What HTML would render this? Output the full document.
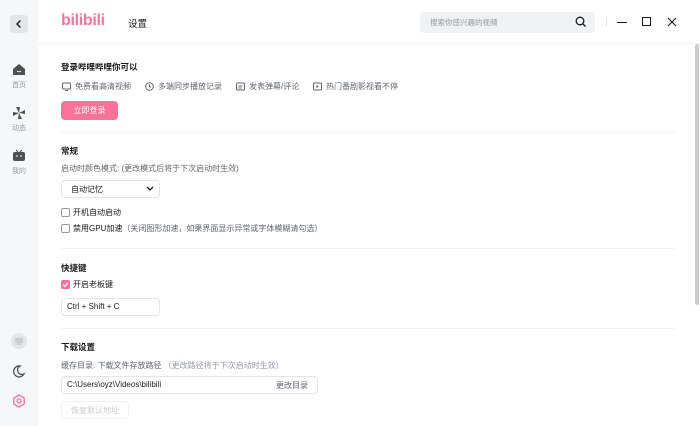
<!DOCTYPE html>
<html><head><meta charset="utf-8"><style>
*{margin:0;padding:0;box-sizing:border-box}
body{width:700px;height:426px;overflow:hidden;background:#fff;font-family:"Liberation Sans","Noto Sans CJK SC",sans-serif;color:#18191c;position:relative;font-size:8px}
.a{position:absolute}
.side{left:0;top:0;width:38px;height:426px;background:#f6f7f8}
.t{position:absolute;white-space:nowrap}
.h{font-size:8.5px;font-weight:bold}
.g{color:#61666d}
.line{position:absolute;left:61px;width:615px;height:1px;background:#f1f2f3}
.box{position:absolute;border:1px solid #e3e5e7;border-radius:4px;background:#fff}
.cb{position:absolute;width:9px;height:9px;border:1px solid #9499a0;border-radius:2px;background:#fff}
</style></head><body>
<div class="a side"></div>
<div class="a" style="left:10px;top:15px;width:18px;height:18px;background:#e3e5e7;border-radius:4px"></div>
<svg class="a" style="left:10px;top:15px" width="18" height="18"><path d="M10.5 5.5L7 9l3.5 3.5" stroke="#18191c" stroke-width="1.4" fill="none"/></svg>
<svg class="a" style="left:12px;top:63px" width="14" height="13"><path d="M7 1L1 6v6h12V6z" fill="#505050"/><path d="M5 8q2 1.5 4 0" stroke="#f6f7f8" stroke-width="1" fill="none"/></svg>
<div class="t g" style="left:12px;top:80px;font-size:7px;color:#9499a0">首页</div>
<svg class="a" style="left:12px;top:106px" width="14" height="14"><g fill="#505050"><path d="M7 7L4 1h4z"/><path d="M7 7l6-3v4z"/><path d="M7 7l3 6H6z"/><path d="M7 7L1 10V6z"/></g></svg>
<div class="t" style="left:12px;top:123px;font-size:7px;color:#9499a0">动态</div>
<svg class="a" style="left:12px;top:149px" width="14" height="13"><path d="M4 1l2 2M10 1L8 3" stroke="#505050"/><rect x="1" y="3" width="12" height="9" rx="2" fill="#505050"/><path d="M5 6v2M9 6v2" stroke="#f6f7f8"/></svg>
<div class="t" style="left:12px;top:166px;font-size:7px;color:#9499a0">我的</div>
<div class="a" style="left:11px;top:333px;width:16px;height:16px;border-radius:50%;background:#e3e5e7"></div>
<svg class="a" style="left:14px;top:336px" width="10" height="10"><rect x="1" y="2" width="8" height="5" rx="1" fill="#c9ccd0"/><rect x="3" y="7" width="4" height="2" fill="#c9ccd0"/></svg>
<svg class="a" style="left:12px;top:364px" width="14" height="14"><path d="M8 2a5.5 5.5 0 1 0 4 8 4 4 0 0 1-4-8z" stroke="#505050" stroke-width="1.3" fill="none"/></svg>
<svg class="a" style="left:12px;top:394px" width="14" height="14"><path d="M7 1l5.2 3v6L7 13 1.8 10V4z" stroke="#fb7299" stroke-width="1.3" fill="none"/><circle cx="7" cy="7" r="2" stroke="#fb7299" stroke-width="1.3" fill="none"/></svg>
<div class="a" style="left:38px;top:43px;width:662px;height:1px;background:#f1f2f3"></div>
<div class="t" style="left:61px;top:12px;font-size:16px;font-weight:bold;color:#fb7299;letter-spacing:-0.3px">bilibili</div>
<div class="t" style="left:128px;top:16px;font-size:9.5px">设置</div>
<div class="a" style="left:420px;top:12px;width:175px;height:21px;background:#f1f2f3;border-radius:4px"></div>
<div class="t" style="left:430px;top:17px;font-size:7.5px;color:#9499a0">搜索你感兴趣的视频</div>
<svg class="a" style="left:575px;top:16px" width="12" height="12"><circle cx="5" cy="5" r="3.8" stroke="#18191c" stroke-width="1.3" fill="none"/><path d="M8 8l2.5 2.5" stroke="#18191c" stroke-width="1.3"/></svg>
<div class="a" style="left:606px;top:17px;width:1px;height:10px;background:#e3e5e7"></div>
<div class="a" style="left:617px;top:22px;width:10px;height:1px;background:#18191c"></div>
<div class="a" style="left:642px;top:17px;width:9px;height:9px;border:1.2px solid #18191c"></div>
<svg class="a" style="left:667px;top:17px" width="10" height="10"><path d="M1 1l8 8M9 1L1 9" stroke="#18191c" stroke-width="1.1"/></svg>
<div class="a" style="left:695px;top:44px;width:4px;height:261px;background:#c9ccd0;border-radius:2px"></div>
<div class="t h" style="left:61px;top:61px">登录哔哩哔哩你可以</div>
<svg class="a" style="left:62px;top:82px" width="9" height="9"><rect x=".5" y="1" width="8" height="6" rx="1" stroke="#61666d" fill="none"/><path d="M3 8.5h3" stroke="#61666d"/></svg>
<div class="t g" style="left:75px;top:81px">免费看高清视频</div>
<svg class="a" style="left:145px;top:82px" width="9" height="9"><circle cx="4.5" cy="4.5" r="3.8" stroke="#61666d" fill="none"/><path d="M4.5 2.5v2l1.5 1" stroke="#61666d" fill="none"/></svg>
<div class="t g" style="left:158px;top:81px">多端同步播放记录</div>
<svg class="a" style="left:236px;top:82px" width="9" height="9"><rect x=".5" y="1" width="8" height="7" rx="1" stroke="#61666d" fill="none"/><path d="M2.5 4h4M2.5 6h3" stroke="#61666d"/></svg>
<div class="t g" style="left:249px;top:81px">发表弹幕/评论</div>
<svg class="a" style="left:313px;top:82px" width="9" height="9"><rect x=".5" y="1" width="8" height="7" rx="1" stroke="#61666d" fill="none"/><path d="M3.5 3v3l2.5-1.5z" fill="#61666d"/></svg>
<div class="t g" style="left:326px;top:81px">热门番剧影视看不停</div>
<div class="a" style="left:61px;top:101px;width:57px;height:19px;background:#fb7299;border-radius:4px;color:#fff;font-size:8px;text-align:center;line-height:19px">立即登录</div>
<div class="line" style="top:132px"></div>
<div class="t h" style="left:61px;top:145px">常规</div>
<div class="t g" style="left:61px;top:163px">启动时颜色模式: (更改模式后将于下次启动时生效)</div>
<div class="box" style="left:61px;top:180px;width:99px;height:18px"></div>
<div class="t" style="left:71px;top:184px">自动记忆</div>
<svg class="a" style="left:146px;top:186px" width="8" height="6"><path d="M1 1l3 3 3-3" stroke="#18191c" stroke-width="1.3" fill="none"/></svg>
<div class="cb" style="left:61px;top:208px"></div>
<div class="t" style="left:73px;top:207px">开机自动启动</div>
<div class="cb" style="left:61px;top:224px"></div>
<div class="t" style="left:73px;top:223px">禁用GPU加速<span class="g">（关闭图形加速，如果界面显示异常或字体模糊请勾选）</span></div>
<div class="line" style="top:248px"></div>
<div class="t h" style="left:61px;top:262px">快捷键</div>
<div class="a" style="left:61px;top:280px;width:9px;height:9px;background:#fb7299;border-radius:2px"></div>
<svg class="a" style="left:61px;top:280px" width="9" height="9"><path d="M2 4.5l2 2 3-4" stroke="#fff" stroke-width="1.2" fill="none"/></svg>
<div class="t" style="left:73px;top:279px">开启老板键</div>
<div class="box" style="left:61px;top:298px;width:99px;height:18px"></div>
<div class="t" style="left:67px;top:302px">Ctrl + Shift + C</div>
<div class="line" style="top:328px"></div>
<div class="t h" style="left:61px;top:341px">下载设置</div>
<div class="t g" style="left:61px;top:360px">缓存目录: 下载文件存放路径 <span style="color:#9499a0">（更改路径将于下次启动时生效）</span></div>
<div class="box" style="left:61px;top:376px;width:257px;height:18px"></div>
<div class="t" style="left:67px;top:380px">C:\Users\oyz\Videos\bilibili</div>
<div class="t g" style="left:276px;top:380px">更改目录</div>
<div class="box" style="left:61px;top:401px;width:68px;height:18px;border-color:#f1f2f3"></div>
<div class="t" style="left:71px;top:405px;color:#c9ccd0">恢复默认地址</div>
</body></html>
